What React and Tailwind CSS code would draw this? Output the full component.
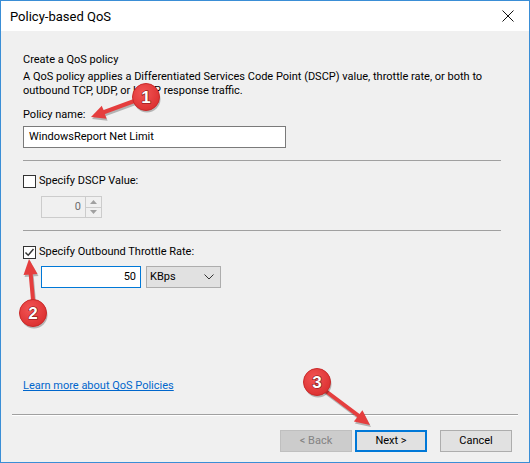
import React from "react";

function Checkbox({ checked }) {
  return (
    <div className="w-[13px] h-[13px] border border-[#333333] bg-white flex items-center justify-center shrink-0">
      {checked && (
        <svg width="11" height="11" viewBox="0 0 11 11">
          <path d="M1.5 5.5 L4.2 8.3 L9.5 2" fill="none" stroke="#333333" strokeWidth="1.4" />
        </svg>
      )}
    </div>
  );
}

function Badge({ cx, cy, n }) {
  return (
    <g>
      <circle cx={cx + 1} cy={cy + 2} r="13.5" fill="rgba(0,0,0,0.25)" />
      <circle cx={cx} cy={cy} r="13.5" fill="url(#rg)" stroke="#c92a2a" strokeWidth="1" />
      <text
        x={cx}
        y={cy + 6}
        textAnchor="middle"
        fontFamily="'Liberation Sans', Arial, sans-serif"
        fontWeight="700"
        fontSize="17"
        fill="#ffffff"
        stroke="#7a1010"
        strokeWidth="1.2"
        paintOrder="stroke"
      >
        {n}
      </text>
    </g>
  );
}

function Annotations() {
  return (
    <svg className="absolute left-0 top-0 pointer-events-none" width="530" height="463" viewBox="0 0 530 463">
      <defs>
        <radialGradient id="rg" cx="0.4" cy="0.35" r="0.7">
          <stop offset="0" stopColor="#f25555" />
          <stop offset="1" stopColor="#db2f2f" />
        </radialGradient>
      </defs>
      <g opacity="0.25" transform="translate(1,2)">
        <line x1="136" y1="100" x2="102" y2="112.5" stroke="#000" strokeWidth="4" />
        <polygon points="90,117 100.8,105.7 105.6,118.8" fill="#000" />
      </g>
      <line x1="136" y1="100" x2="102" y2="112.5" stroke="#e53e3e" strokeWidth="4" strokeLinecap="round" />
      <polygon points="90,117 100.8,105.7 105.6,118.8" fill="#e53e3e" />
      <g opacity="0.25" transform="translate(1,2)">
        <line x1="32" y1="300" x2="29.5" y2="272" stroke="#000" strokeWidth="4" />
        <polygon points="28,259 36.5,274 22.5,275" fill="#000" />
      </g>
      <line x1="32" y1="300" x2="29.5" y2="272" stroke="#e53e3e" strokeWidth="4" strokeLinecap="round" />
      <polygon points="28,259 36.5,274 22.5,275" fill="#e53e3e" />
      <g opacity="0.25" transform="translate(1,2)">
        <line x1="322" y1="389" x2="358" y2="416" stroke="#000" strokeWidth="4" />
        <polygon points="369,425 352.9,421.5 361.4,410.3" fill="#000" />
      </g>
      <line x1="322" y1="389" x2="358" y2="416" stroke="#e53e3e" strokeWidth="4" strokeLinecap="round" />
      <polygon points="369,425 352.9,421.5 361.4,410.3" fill="#e53e3e" />
      <Badge cx={145} cy={97} n="1" />
      <Badge cx={32} cy={313} n="2" />
      <Badge cx={316} cy={382} n="3" />
    </svg>
  );
}

export default function App() {
  return (
    <div
      className="relative w-[530px] h-[463px] bg-[#f0f0f0] border-x border-b border-[#3a8ed6] flex flex-col text-[11px] text-black overflow-hidden"
      style={{ fontFamily: "Roboto, 'Noto Sans', 'Liberation Sans', Arial, sans-serif" }}
    >
      <div className="h-[31px] bg-white flex items-center justify-between pl-[9px] pr-[15px] shrink-0 border-t border-[#3a8ed6]">
        <span className="text-[13px] leading-[15px]">Policy-based QoS</span>
        <svg width="12" height="12" viewBox="0 0 12 12">
          <path d="M0.5 0.5 L11.5 11.5 M11.5 0.5 L0.5 11.5" stroke="#111" strokeWidth="1" />
        </svg>
      </div>

      <div className="flex-1 flex flex-col pl-[22px] pr-[28px]">
        <div className="mt-[21px] leading-[15px]">Create a QoS policy</div>
        <div className="mt-[3px] leading-[14px] whitespace-nowrap">
          A QoS policy applies a Differentiated Services Code Point (DSCP) value, throttle rate, or both to
          <br />
          outbound TCP, UDP, or HTTP response traffic.
        </div>
        <div className="mt-[10px] leading-[14px]">Policy name:</div>
        <div className="mt-[4px] w-[263px] h-[22px] bg-white border border-[#7a7a7a] flex items-center px-[5px] leading-[14px]">
          WindowsReport Net Limit
        </div>
        <div className="mt-[12px] h-px bg-[#a0a0a0] w-[478px]" />

        <div className="mt-[13px] flex items-center gap-[3px] h-[14px]">
          <Checkbox />
          <span className="leading-[14px]">Specify DSCP Value:</span>
        </div>
        <div className="mt-[8px] ml-[18px] w-[61px] h-[22px] border border-[#cccccc] flex">
          <div className="flex-1 flex items-center justify-end pr-[4px] text-[#6d6d6d]">0</div>
          <div className="w-[16px] flex flex-col border-l border-[#cccccc]">
            <div className="flex-1 flex items-center justify-center border-b border-[#cccccc]">
              <svg width="7" height="4" viewBox="0 0 7 4"><path d="M0 4 L3.5 0 L7 4 Z" fill="#a0a0a0" /></svg>
            </div>
            <div className="flex-1 flex items-center justify-center">
              <svg width="7" height="4" viewBox="0 0 7 4"><path d="M0 0 L3.5 4 L7 0 Z" fill="#a0a0a0" /></svg>
            </div>
          </div>
        </div>
        <div className="mt-[12px] h-px bg-[#a0a0a0] w-[478px]" />

        <div className="mt-[14px] flex items-center gap-[3px] h-[14px]">
          <Checkbox checked />
          <span className="leading-[14px]">Specify Outbound Throttle Rate:</span>
        </div>
        <div className="mt-[7px] ml-[18px] flex gap-[5px]">
          <div className="w-[100px] h-[22px] bg-white border border-[#0078d7] flex items-center justify-end pr-[4px]">50</div>
          <div className="w-[75px] h-[22px] bg-[#e1e1e1] border border-[#adadad] flex items-center justify-between pl-[3px] pr-[6px]">
            <span>KBps</span>
            <svg width="10" height="6" viewBox="0 0 10 6"><path d="M0.5 0.5 L5 5 L9.5 0.5" fill="none" stroke="#333" strokeWidth="1" /></svg>
          </div>
        </div>

        <div className="mt-[91px] leading-[14px]">
          <span className="text-[#0066cc] underline">Learn more about QoS Policies</span>
        </div>
      </div>

      <div className="mx-[11px] h-[2px] border-t border-[#a0a0a0] border-b border-b-white shrink-0" />
      <div className="h-[46px] flex justify-end items-start pt-[14px] pr-[17px] gap-[3px] shrink-0">
        <div className="w-[72px] h-[22px] bg-[#cccccc] border border-[#bfbfbf] text-[#838383] flex items-center justify-center">&lt; Back</div>
        <div className="w-[72px] h-[22px] bg-[#e1e1e1] border-2 border-[#0078d7] flex items-center justify-center">Next &gt;</div>
        <div className="w-[72px] h-[22px] bg-[#e1e1e1] border border-[#adadad] flex items-center justify-center ml-[10px]">Cancel</div>
      </div>

      <Annotations />
    </div>
  );
}
